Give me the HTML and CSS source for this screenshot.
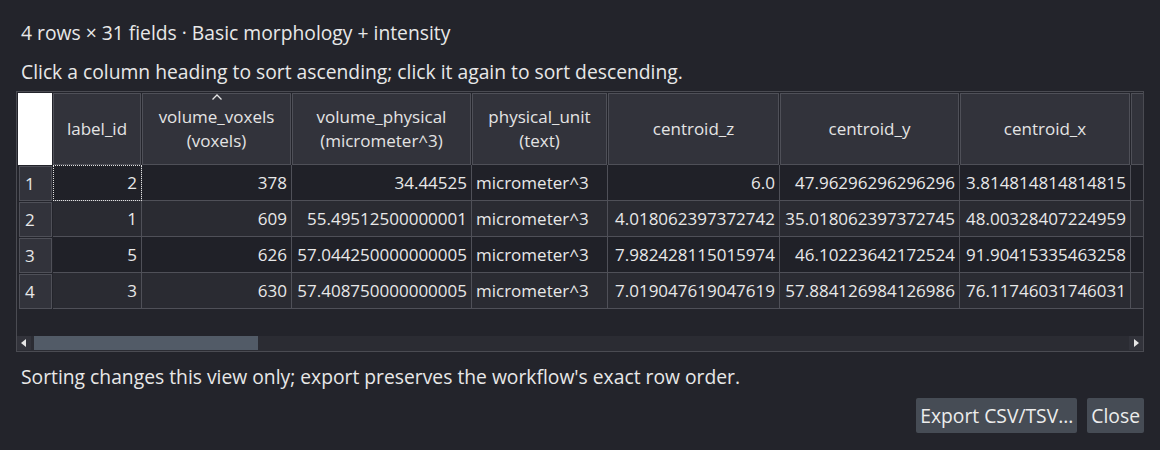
FILE: index.html
```html
<!DOCTYPE html>
<html lang="en">
<head>
<meta charset="utf-8">
<title>Table view</title>
<link rel="stylesheet" href="styles.css">
</head>
<body>
<div class="dialog">
  <p class="title">4 rows × 31 fields · Basic morphology + intensity</p>
  <p class="hint">Click a column heading to sort ascending; click it again to sort descending.</p>
  <div class="frame">
    <div class="viewport">
      <div class="grid">
        <div class="corner"></div>
        <div class="hsec">label_id</div>
        <div class="hsec sorted"><svg class="caret" width="10" height="6" viewBox="0 0 10 6"><polyline points="0.5,5.5 5,1 9.5,5.5" fill="none" stroke="#e6e6e6" stroke-width="1.3"/></svg>volume_voxels<br>(voxels)</div>
        <div class="hsec">volume_physical<br>(micrometer^3)</div>
        <div class="hsec">physical_unit<br>(text)</div>
        <div class="hsec">centroid_z</div>
        <div class="hsec">centroid_y</div>
        <div class="hsec">centroid_x</div>
        <div class="hsec"></div>

        <div class="vsec">1</div>
        <div class="cell num odd focus">2</div>
        <div class="cell num odd">378</div>
        <div class="cell num odd">34.44525</div>
        <div class="cell txt odd">micrometer^3</div>
        <div class="cell num odd">6.0</div>
        <div class="cell num odd">47.96296296296296</div>
        <div class="cell num odd">3.814814814814815</div>
        <div class="cell num odd"></div>

        <div class="vsec">2</div>
        <div class="cell num even">1</div>
        <div class="cell num even">609</div>
        <div class="cell num even">55.49512500000001</div>
        <div class="cell txt even">micrometer^3</div>
        <div class="cell num even">4.018062397372742</div>
        <div class="cell num even">35.018062397372745</div>
        <div class="cell num even">48.00328407224959</div>
        <div class="cell num even"></div>

        <div class="vsec">3</div>
        <div class="cell num odd">5</div>
        <div class="cell num odd">626</div>
        <div class="cell num odd">57.044250000000005</div>
        <div class="cell txt odd">micrometer^3</div>
        <div class="cell num odd">7.982428115015974</div>
        <div class="cell num odd">46.10223642172524</div>
        <div class="cell num odd">91.90415335463258</div>
        <div class="cell num odd"></div>

        <div class="vsec">4</div>
        <div class="cell num even">3</div>
        <div class="cell num even">630</div>
        <div class="cell num even">57.408750000000005</div>
        <div class="cell txt even">micrometer^3</div>
        <div class="cell num even">7.019047619047619</div>
        <div class="cell num even">57.884126984126986</div>
        <div class="cell num even">76.11746031746031</div>
        <div class="cell num even"></div>
      </div>
    </div>
    <div class="hscroll">
      <div class="sbtn"><svg width="6" height="8" viewBox="0 0 6 8"><polygon points="5,0 5,8 0,4" fill="#e6e6e6"/></svg></div>
      <div class="track"><div class="thumb"></div></div>
      <div class="sbtn"><svg width="6" height="8" viewBox="0 0 6 8"><polygon points="1,0 1,8 6,4" fill="#e6e6e6"/></svg></div>
    </div>
  </div>
  <p class="note">Sorting changes this view only; export preserves the workflow's exact row order.</p>
  <div class="buttons">
    <button class="btn">Export CSV/TSV...</button>
    <button class="btn">Close</button>
  </div>
</div>
</body>
</html>
```

FILE: styles.css
```css
html, body {
  margin: 0;
  padding: 0;
  background: #23242b;
}
body {
  width: 1160px;
  height: 450px;
  overflow: hidden;
  font-family: "Open Sans", "Noto Sans", sans-serif;
  font-size: 19.3px;
  color: #e8e8e8;
}
.dialog {
  padding: 21px 16px 0 16px;
}
.title, .hint, .note {
  margin: 0;
  padding-left: 5px;
  line-height: 24px;
  height: 24px;
  white-space: nowrap;
}
.hint {
  margin-top: 15px;
}
.frame {
  margin-top: 7px;
  border: 1px solid #4a4b52;
  height: 259px;
  display: flex;
  flex-direction: column;
  font-size: 17px;
}
.viewport {
  height: 243px;
  padding: 1px 0 0 1px;
  overflow: hidden;
  background: #23242b;
}
.grid {
  display: grid;
  grid-template-columns: 35px 89px 150px 180px 136px 172px 180px 171px 140px;
  grid-template-rows: 72px repeat(4, 36px);
  width: max-content;
}
.corner {
  background: #ffffff;
  margin-right: 1px;
}
.hsec {
  position: relative;
  background: #32333b;
  border: 1px solid #4f5058;
  margin-right: 1px;
  display: flex;
  align-items: center;
  justify-content: center;
  text-align: center;
  line-height: 24px;
  color: #e4e4e4;
  white-space: nowrap;
}
.caret {
  position: absolute;
  top: 0;
  left: 50%;
  margin-left: -5px;
}
.vsec {
  background: #32333b;
  border: 1px solid #4f5058;
  margin: 1px 1px 0 1px;
  display: flex;
  align-items: center;
  padding-left: 5px;
}
.cell {
  border-right: 1px solid #4f5058;
  border-bottom: 1px solid #4f5058;
  display: flex;
  align-items: center;
  padding: 0 4px;
  white-space: nowrap;
  overflow: hidden;
}
.num { justify-content: flex-end; }
.txt { justify-content: flex-start; }
.odd { background: #202128; }
.even { background: #2a2b32; }
.focus {
  outline: 1px dotted #e0e0e0;
  outline-offset: -1px;
}
.hscroll {
  height: 15px;
  display: flex;
  background: #2b2c33;
}
.sbtn {
  width: 14px;
  height: 14px;
  background: #32333b;
  display: flex;
  align-items: center;
  justify-content: center;
}
.track {
  flex: 1;
  padding: 0 3px;
}
.thumb {
  width: 224px;
  height: 14px;
  background: #525b67;
}
.note {
  margin-top: 13px;
}
.buttons {
  margin-top: 9px;
  display: flex;
  justify-content: flex-end;
  gap: 10px;
}
.btn {
  height: 35px;
  padding: 0 4px;
  border: none;
  border-radius: 2px;
  background: #464c55;
  color: #ececec;
  font-family: inherit;
  font-size: inherit;
}
```
